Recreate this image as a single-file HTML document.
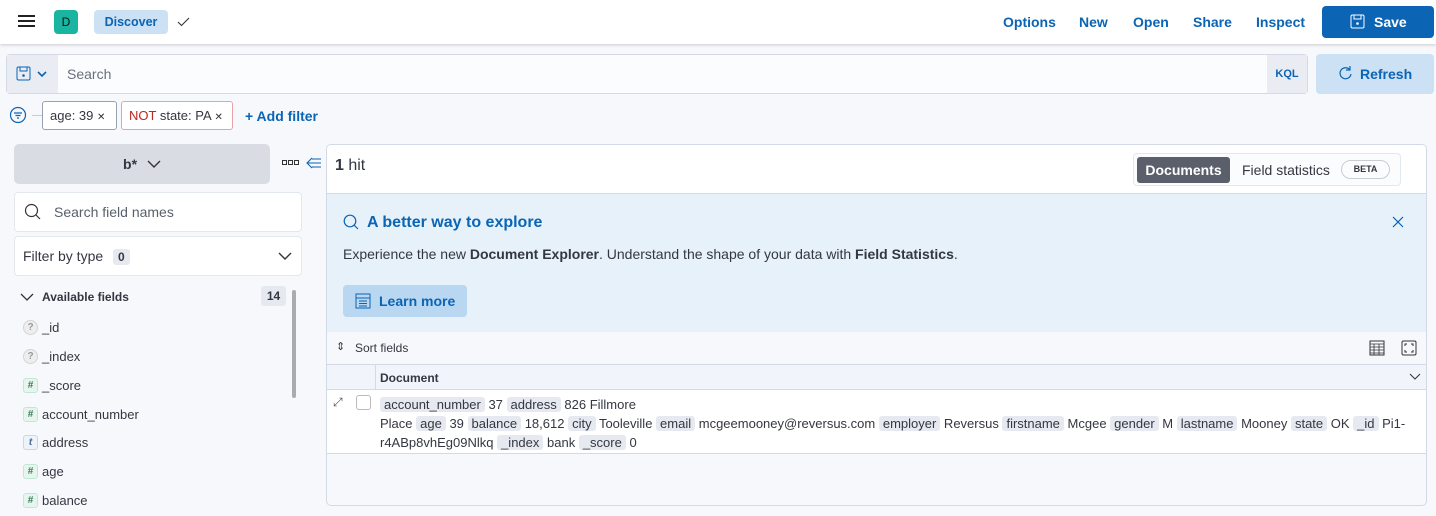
<!DOCTYPE html>
<html><head><meta charset="utf-8"><style>
*{box-sizing:border-box;margin:0;padding:0}
body{width:1436px;height:516px;overflow:hidden;background:#f7f8fc;font-family:"Liberation Sans",sans-serif;color:#343741;font-size:14px;position:relative}
.a{position:absolute}
.hdr{left:0;top:0;width:1436px;height:44px;background:#fff;box-shadow:0 1px 3px rgba(0,0,0,.18)}
.nav{color:#0b64b4;font-weight:bold;font-size:14px;top:14px}
.tag{background:#e6e9f0;border-radius:3px;padding:0 4px;color:#343741}
.fi{left:23px;width:15px;height:15px;border-radius:3px;font-size:10px;text-align:center;line-height:14px;font-weight:bold}
.num{background:#e6f5ee;border:1px solid #c4e7d5;color:#3f7a5e}
.q{background:#eee;border:1px solid #d4d4d4;color:#999;border-radius:50%}
.fn{left:42px;font-size:13px}
.x{font-size:10px;color:#333}
</style></head><body>
<div class="a hdr"></div>
<div class="a" style="left:18px;top:15px;width:17px;height:2px;background:#222;box-shadow:0 5px 0 #222,0 10px 0 #222"></div>
<div class="a" style="left:54px;top:10px;width:24px;height:24px;background:#1ab5a0;border-radius:4px;color:#111;text-align:center;line-height:24px;font-size:12px">D</div>
<div class="a" style="left:94px;top:10px;width:74px;height:24px;background:#cce1f3;border-radius:4px;color:#0b64b4;font-weight:bold;font-size:12.5px;text-align:center;line-height:24px">Discover</div>
<svg class="a" style="left:177px;top:17px" width="13" height="10"><path d="M1 5l3.5 3.5L12 1" stroke="#333" stroke-width="1.1" fill="none"/></svg>
<div class="a nav" style="left:1003px">Options</div>
<div class="a nav" style="left:1079px">New</div>
<div class="a nav" style="left:1133px">Open</div>
<div class="a nav" style="left:1193px">Share</div>
<div class="a nav" style="left:1256px">Inspect</div>
<div class="a" style="left:1322px;top:6px;width:112px;height:32px;background:#0b64b4;border-radius:4px;color:#fff;font-weight:bold;line-height:32px;padding-left:52px">Save</div>
<svg class="a" style="left:1350px;top:14px" width="15" height="15"><rect x="1" y="1" width="13" height="13" rx="1.5" stroke="#fff" fill="none"/><rect x="4" y="1" width="7" height="4" stroke="#fff" fill="none"/><circle cx="7.5" cy="9.5" r="1.3" fill="#fff"/></svg>

<div class="a" style="left:6px;top:54px;width:1302px;height:40px;border:1px solid #d3dae6;border-radius:4px;background:#fbfcfd"></div>
<div class="a" style="left:7px;top:55px;width:51px;height:38px;background:#e9edf3"></div>
<svg class="a" style="left:16px;top:66px" width="36" height="16"><rect x="1" y="1" width="13" height="13" rx="1.5" stroke="#0b64b4" fill="none"/><rect x="4" y="1" width="7" height="4" stroke="#0b64b4" fill="none"/><circle cx="7.5" cy="9.5" r="1.3" fill="#0b64b4"/><path d="M22 6l4 4 4-4" stroke="#0b64b4" stroke-width="1.6" fill="none"/></svg>
<div class="a" style="left:67px;top:66px;color:#69707d">Search</div>
<div class="a" style="left:1267px;top:55px;width:40px;height:38px;background:#e9edf3;color:#0b64b4;font-size:11px;font-weight:bold;text-align:center;line-height:38px">KQL</div>
<div class="a" style="left:1316px;top:54px;width:118px;height:40px;background:#cce1f3;border-radius:4px;color:#0b64b4;font-weight:bold;line-height:40px;padding-left:44px">Refresh</div>
<svg class="a" style="left:1338px;top:66px" width="15" height="15"><path d="M12 4A5.5 5.5 0 1 0 13 8" stroke="#0b64b4" stroke-width="1.2" fill="none"/><path d="M12 0v4h-4" stroke="#0b64b4" stroke-width="1.2" fill="none"/></svg>

<svg class="a" style="left:9px;top:106px" width="18" height="18"><circle cx="9" cy="9" r="7.5" stroke="#0b64b4" fill="none" stroke-width="1.2"/><path d="M5 7h8M6.5 9.5h5M8 12h2" stroke="#0b64b4" stroke-width="1.2"/></svg>
<div class="a" style="left:32px;top:115px;width:10px;height:1px;background:#ccc"></div>
<div class="a" style="left:42px;top:101px;width:75px;height:29px;border:1px solid #98a2b3;border-radius:3px;background:#fff;font-size:13px;line-height:27px;padding-left:7px">age: 39 <span class="x">✕</span></div>
<div class="a" style="left:121px;top:101px;width:112px;height:29px;border:1px solid #e7a3a3;border-radius:3px;background:#fff;font-size:13px;line-height:27px;padding-left:7px"><span style="color:#bd271e">NOT</span> state: PA <span class="x">✕</span></div>
<div class="a" style="left:245px;top:108px;color:#0b64b4;font-weight:bold">+ Add filter</div>

<div class="a" style="left:14px;top:144px;width:256px;height:40px;background:#d9dce2;border-radius:5px;text-align:center;line-height:40px;font-weight:bold">b* <svg width="14" height="10" style="margin-left:6px"><path d="M1 2l6 6 6-6" stroke="#333" stroke-width="1.4" fill="none"/></svg></div>
<svg class="a" style="left:282px;top:160px" width="18" height="6"><rect x=".5" y=".5" width="4" height="4" stroke="#333" fill="none"/><rect x="6.5" y=".5" width="4" height="4" stroke="#333" fill="none"/><rect x="12.5" y=".5" width="4" height="4" stroke="#333" fill="none"/></svg>
<svg class="a" style="left:306px;top:157px" width="16" height="12"><path d="M6 1L1 6l5 5M1 6h14M6 2h9M6 10h9" stroke="#0b64b4" stroke-width="1.1" fill="none"/></svg>
<div class="a" style="left:14px;top:192px;width:288px;height:40px;background:#fff;border:1px solid #e3e7ee;border-radius:4px;color:#5a606b;line-height:38px;padding-left:39px">Search field names</div>
<svg class="a" style="left:24px;top:203px" width="18" height="18"><circle cx="7.5" cy="7.5" r="6" stroke="#333" fill="none" stroke-width="1.2"/><path d="M12 12l4 4" stroke="#333" stroke-width="1.2"/></svg>
<div class="a" style="left:14px;top:236px;width:288px;height:40px;background:#fff;border:1px solid #e3e7ee;border-radius:4px;line-height:38px;padding-left:8px">Filter by type <span style="background:#e6e9f0;border-radius:3px;padding:1px 5px;font-size:12px;font-weight:bold;margin-left:6px">0</span></div>
<svg class="a" style="left:278px;top:251px" width="14" height="10"><path d="M1 2l6 6 6-6" stroke="#333" stroke-width="1.4" fill="none"/></svg>
<svg class="a" style="left:20px;top:292px" width="14" height="10"><path d="M1 2l6 6 6-6" stroke="#333" stroke-width="1.3" fill="none"/></svg>
<div class="a" style="left:42px;top:290px;font-size:12px;font-weight:bold">Available fields</div>
<div class="a" style="left:261px;top:286px;width:25px;height:20px;background:#e6e9f0;border-radius:3px;font-size:12px;text-align:center;line-height:20px;font-weight:bold">14</div>
<div class="a" style="left:292px;top:290px;width:4px;height:108px;background:#a8abb1;border-radius:2px"></div>
<div class="a fi q" style="top:320px">?</div><div class="a fn" style="top:320px">_id</div>
<div class="a fi q" style="top:349px">?</div><div class="a fn" style="top:349px">_index</div>
<div class="a fi num" style="top:378px">#</div><div class="a fn" style="top:378px">_score</div>
<div class="a fi num" style="top:407px">#</div><div class="a fn" style="top:407px">account_number</div>
<div class="a fi" style="top:435px;background:#eef3fa;border:1px solid #c8d7ea;color:#44689a;font-style:italic">t</div><div class="a fn" style="top:435px">address</div>
<div class="a fi num" style="top:464px">#</div><div class="a fn" style="top:464px">age</div>
<div class="a fi num" style="top:493px">#</div><div class="a fn" style="top:493px">balance</div>

<div class="a" style="left:326px;top:144px;width:1101px;height:362px;border:1px solid #d3dae6;border-radius:5px;background:#f7f8fc;overflow:hidden">
 <div class="a" style="left:0;top:0;width:1101px;height:49px;background:#fff;border-bottom:1px solid #d3dae6"></div>
 <div class="a" style="left:8px;top:12px;font-size:16px"><b>1</b> hit</div>
 <div class="a" style="left:806px;top:8px;width:268px;height:33px;border:1px solid #e3e7ee;border-radius:4px;background:#fbfcfd"></div>
 <div class="a" style="left:810px;top:12px;width:93px;height:26px;background:#5a5f6b;border-radius:3px;color:#fff;font-weight:bold;text-align:center;line-height:26px">Documents</div>
 <div class="a" style="left:915px;top:17px">Field statistics</div>
 <div class="a" style="left:1014px;top:15px;width:49px;height:19px;border:1px solid #c8ccd3;border-radius:10px;font-size:9px;font-weight:bold;text-align:center;line-height:17px">BETA</div>
 <div class="a" style="left:0;top:49px;width:1101px;height:138px;background:#e6f1fa"></div>
 <svg class="a" style="left:16px;top:69px" width="18" height="18"><circle cx="7" cy="7" r="5.8" stroke="#0b64b4" fill="none" stroke-width="1.2"/><path d="M11 11l4 4" stroke="#0b64b4" stroke-width="1.2"/></svg>
 <div class="a" style="left:40px;top:69px;color:#0b64b4;font-size:16px;font-weight:bold">A better way to explore</div>
 <svg class="a" style="left:1065px;top:71px" width="12" height="12"><path d="M1 1l10 10M11 1L1 11" stroke="#0b64b4" stroke-width="1.2"/></svg>
 <div class="a" style="left:16px;top:101px">Experience the new <b>Document Explorer</b>. Understand the shape of your data with <b>Field Statistics</b>.</div>
 <div class="a" style="left:16px;top:140px;width:124px;height:32px;background:#b9d7f0;border-radius:4px;color:#0b64b4;font-weight:bold;line-height:32px;padding-left:36px">Learn more</div>
 <svg class="a" style="left:28px;top:148px" width="16" height="16"><rect x="1" y="1" width="14" height="14" stroke="#0b64b4" fill="none"/><path d="M1 5h14M4 8h8M4 10.5h8M4 13h8" stroke="#0b64b4"/></svg>
 <div class="a" style="left:0;top:187px;width:1101px;height:33px;background:#f7f8fc;border-bottom:1px solid #d3dae6"></div>
 <div class="a" style="left:9px;top:195px;font-size:11px">⇕</div>
 <div class="a" style="left:28px;top:196px;font-size:12px">Sort fields</div>
 <svg class="a" style="left:1042px;top:195px" width="16" height="16"><rect x="1" y="1" width="14" height="14" stroke="#333" fill="none"/><path d="M1 4h14M1 7h14M1 10h14M1 13h14M5 4v11M10 4v11" stroke="#333" stroke-width=".8"/></svg>
 <svg class="a" style="left:1074px;top:195px" width="16" height="16"><rect x="1" y="1" width="14" height="14" rx="1.5" stroke="#333" fill="none"/><path d="M4 6V4h2M10 4h2v2M12 10v2h-2M6 12H4v-2" stroke="#333" fill="none"/></svg>
 <div class="a" style="left:0;top:220px;width:1101px;height:25px;background:#f1f4fa;border-bottom:1px solid #d3dae6"></div>
 <div class="a" style="left:48px;top:220px;width:1px;height:89px;background:#d3dae6"></div>
 <div class="a" style="left:53px;top:226px;font-size:12px;font-weight:bold">Document</div>
 <svg class="a" style="left:1082px;top:228px" width="12" height="8"><path d="M1 1l5 5 5-5" stroke="#333" fill="none"/></svg>
 <div class="a" style="left:0;top:245px;width:1101px;height:64px;background:#fff;border-bottom:1px solid #d3dae6"></div>
 <div class="a" style="left:6px;top:250px;font-size:12px;color:#555">⤢</div>
 <div class="a" style="left:29px;top:250px;width:15px;height:15px;border:1px solid #bbb;border-radius:3px"></div>
 <div class="a" style="left:53px;top:250px;width:1040px;font-size:13px;line-height:19px">
 <span class="tag">account_number</span> 37 <span class="tag">address</span> 826 Fillmore<br>Place <span class="tag">age</span> 39 <span class="tag">balance</span> 18,612 <span class="tag">city</span> Tooleville <span class="tag">email</span> mcgeemooney@reversus.com <span class="tag">employer</span> Reversus <span class="tag">firstname</span> Mcgee <span class="tag">gender</span> M <span class="tag">lastname</span> Mooney <span class="tag">state</span> OK <span class="tag">_id</span> Pi1-<br>r4ABp8vhEg09Nlkq <span class="tag">_index</span> bank <span class="tag">_score</span> 0</div>
</div>
</body></html>
